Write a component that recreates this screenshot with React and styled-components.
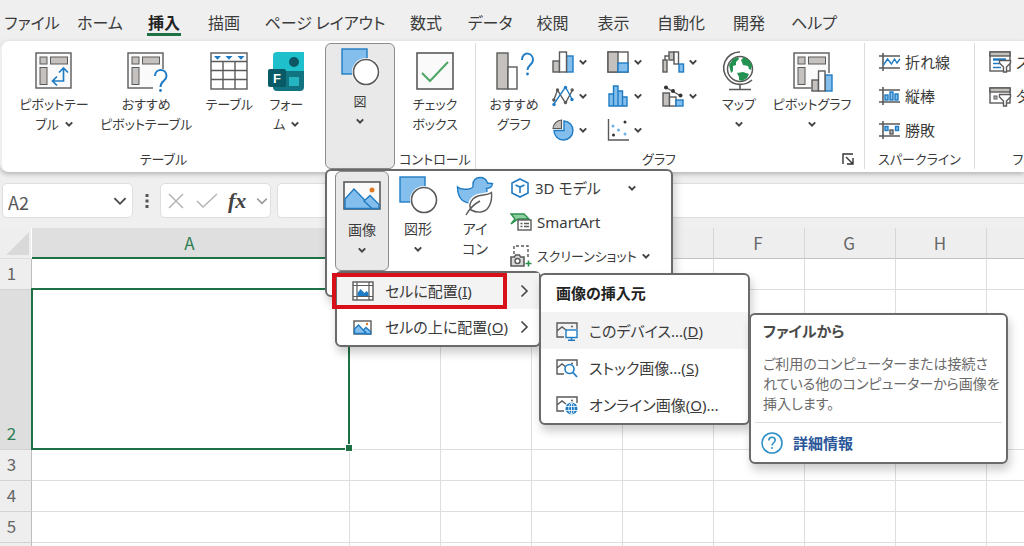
import React from "react";
import styled, { createGlobalStyle, css } from "styled-components";

const GlobalStyle = createGlobalStyle`
  * {
    box-sizing: border-box;
  }

  body {
    margin: 0;
    overflow: hidden;
    background: #efefef;
    color: #3b3b3b;
    font-family: "Noto Sans CJK JP", "Noto Sans", sans-serif;
    font-feature-settings: "palt";
    font-size: 14px;
    line-height: 20px;
  }

  button, input {
    font: inherit;
    font-feature-settings: inherit;
    color: inherit;
  }

  button {
    padding: 0;
    border: 0;
    background: none;
    cursor: pointer;
  }

  svg {
    display: block;
    flex: none;
    fill: none;
    overflow: visible;
  }
`;

const Page = styled.div`
  position: relative;
  height: 100vh;
  overflow: hidden;
  display: flex;
  flex-direction: column;
`;

const Tabs = styled.nav`
  display: flex;
  height: 41px;
  flex: none;
`;

const Tab = styled.button`
  flex: 0 0 ${(p) => p.$width}px;
  padding-top: 3px;
  font-size: 16px;
  white-space: nowrap;
  display: flex;
  justify-content: center;
  align-items: center;

  span {
    padding: 3px 1px 1px;
    line-height: 20px;
    border-bottom: 3px solid transparent;
  }

  ${(p) =>
    p.$active &&
    css`
      color: #222;
      font-weight: bold;

      span {
        border-color: #1e7145;
      }
    `}
`;

const Ribbon = styled.section`
  display: flex;
  flex: none;
  height: 131px;
  margin-left: 2px;
  padding: 2px 0 3px;
  overflow: hidden;
  background: #fff;
  border-radius: 8px 0 0 8px;
`;

const RibbonShadow = styled.div`
  flex: none;
  border-radius: 8px 0 0 8px;
  box-shadow: 0 2px 5px rgba(0, 0, 0, 0.26);
`;

const Group = styled.div`
  flex: 0 0 ${(p) => p.$width}px;
  display: flex;
  flex-direction: column;
  padding-left: ${(p) => p.$indent || 0}px;
  border-right: ${(p) => (p.$line ? "1px solid #dcdcdc" : "0")};
`;

const GroupBody = styled.div`
  flex: 1;
  display: flex;
`;

const GroupFooter = styled.div`
  display: flex;
  align-items: center;
  height: 20px;
  margin-left: -${(p) => p.$indent || 0}px;
  font-size: 13px;

  span {
    flex: 1;
    text-align: center;
    white-space: nowrap;
  }

  button {
    width: 22px;
  }
`;

const BigButton = styled.button`
  flex: 0 0 ${(p) => p.$width}px;
  display: flex;
  flex-direction: column;
  align-items: center;
  gap: 4px;
  padding-top: 9px;
  white-space: nowrap;
  font-size: 13px;
  line-height: 20px;

  ${(p) =>
    p.$pressed &&
    css`
      background: #e9e9e9;
      border: 1px solid #8c8c8c;
      border-radius: 6px;
      padding-top: 5px;
    `}
`;

const Caption = styled.span`
  display: flex;
  flex-direction: column;
  align-items: center;
`;

const CaptionLine = styled.span`
  display: flex;
  align-items: center;
  gap: 6px;
  min-height: 20px;
`;

const SmallGrid = styled.div`
  display: grid;
  grid-template-columns: repeat(3, 55px);
  grid-auto-rows: 34px;
  padding-top: 2px;
`;

const SmallButton = styled.button`
  display: flex;
  align-items: center;
  gap: 5px;
  height: 34px;
  white-space: nowrap;
  font-size: ${(p) => p.$size || 13}px;
`;

const SmallList = styled.div`
  display: flex;
  flex-direction: column;
  padding-top: 2px;
`;

const FormulaBar = styled.div`
  display: flex;
  flex: none;
  height: 35px;
  margin: 11px 0 10px 2px;
`;

const Field = styled.div`
  display: flex;
  align-items: center;
  flex: ${(p) => (p.$width ? `0 0 ${p.$width}px` : "1")};
  min-width: 0;
  background: #fff;
  border: 1px solid #dedede;
  border-right-width: ${(p) => (p.$width ? 1 : 0)}px;
  border-radius: ${(p) => (p.$width ? "5px" : "5px 0 0 5px")};
  padding: 0 5px;
  gap: 10px;

  input {
    flex: 1;
    min-width: 0;
    padding: 2px 0 0;
    border: 0;
    outline: 0;
    background: none;
    font-size: 18px;
    color: #555;
  }
`;

const Dots = styled.div`
  flex: 0 0 27px;
  display: flex;
  justify-content: center;
  align-items: center;
`;

const Spacer = styled.div`
  flex: 0 0 6px;
`;

const FxLabel = styled.span`
  font: italic bold 22px "Liberation Serif", serif;
  color: #444;
`;

const Sheet = styled.table`
  flex: none;
  align-self: flex-start;
  table-layout: fixed;
  width: 1168px;
  border-collapse: separate;
  border-spacing: 0;
  background: #fff;

  th {
    padding: 0;
    font-weight: normal;
    font-size: 17px;
    line-height: 20px;
    color: #666;
    background: #eee;
  }

  td {
    padding: 0;
    border-right: 1px solid #dedede;
    border-bottom: 1px solid #dedede;
  }
`;

const ColumnHead = styled.th`
  height: 31px;
  border-right: 1px solid ${(p) => (p.$active ? "#dfdfdf" : "#d6d6d6")};
  border-bottom: ${(p) => (p.$active ? "2px solid #1e7145" : "1px solid #c4c4c4")};

  && {
    padding-right: 2px;
    background: ${(p) => (p.$active ? "#dfdfdf" : "#eee")};
    color: ${(p) => (p.$active ? "#2f7d53" : "#666")};
  }
`;

const Corner = styled.th`
  border-right: 1px solid #fff;
  border-bottom: 1px solid #dedede;

  svg {
    margin-left: 5px;
  }
`;

const RowHead = styled.th`
  height: ${(p) => p.$height}px;
  vertical-align: bottom;
  border-right: 1px solid #bdbdbd;
  border-bottom: 1px solid #d2d2d2;

  && {
    padding: 0 8px 6px 0;
    ${(p) => p.$active && "background: #dedede; color: #2f7d53;"}
  }
`;

const SelectedCell = styled.td`
  position: relative;

  &::before {
    content: "";
    position: absolute;
    inset: -2px -1px -1px -1px;
    border: 2px solid #1e7145;
  }

  &::after {
    content: "";
    position: absolute;
    right: -3px;
    bottom: -2px;
    width: 6px;
    height: 6px;
    background: #1e7145;
    outline: 1px solid #fff;
  }
`;

const Popup = styled.div`
  position: absolute;
  left: ${(p) => p.$left}px;
  top: ${(p) => p.$top}px;
  width: ${(p) => p.$width}px;
  background: #fff;
  border: 2px solid #6a6a6a;
  border-radius: 6px;
  box-shadow: 2px 6px 10px rgba(0, 0, 0, 0.2);
  font-family: "Noto Sans", "Noto Sans CJK JP", sans-serif;
`;

const GalleryPopup = styled(Popup)`
  display: flex;
  padding: 0 0 22px 8px;
`;

const GalleryButton = styled(BigButton)`
  height: 100px;
  padding-top: 6px;
  font-size: 14px;
`;

const GalleryList = styled(SmallList)`
  padding: 0 0 0 7px;
`;

const MenuItem = styled.button`
  display: flex;
  align-items: center;
  width: 100%;
  height: ${(p) => p.$height || 36}px;
  padding: 0 10px 0 15px;
  gap: 11px;
  font-size: 15px;
  white-space: nowrap;
  background: ${(p) => (p.$hover ? "#f3f3f3" : "none")};

  span {
    flex: 1;
    text-align: left;
  }
`;

const MenuTitle = styled.div`
  padding: 8px 15px 9px;
  font-size: 15px;
  font-weight: bold;
  color: #222;
`;

const RedFrame = styled.div`
  position: absolute;
  left: 332px;
  top: 273px;
  width: 175px;
  height: 36px;
  border: 4px solid #d8101a;
  pointer-events: none;
`;

const Tip = styled(Popup)`
  color: #6a6a6a;
  padding: 6px 4px 8px;

  h2 {
    margin: 0 0 13px;
    padding: 0 8px;
    font-size: 15px;
    line-height: 20px;
    color: #4a4a4a;
  }

  p {
    margin: 0 0 8px;
    padding: 0 8px;
    white-space: nowrap;
  }
`;

const TipLink = styled.a`
  display: flex;
  align-items: center;
  gap: 10px;
  padding: 9px 6px 0;
  border-top: 1px solid #dcdcdc;
  color: #2b579a;
  font-size: 15px;
  font-weight: bold;
  text-decoration: none;
`;

const DARK = "#5a5a5a";
const GRAY = "#c4c1bf";
const BLUE = "#83beec";
const LINE = "#1f7cc4";

const Chevron = ({ size = 8, color = "#444", width = 2 }) => (
  <svg width={size} height={size} viewBox="0 0 8 8">
    <path d="M0.8 2.4 4 5.6 7.2 2.4" stroke={color} strokeWidth={(width * 8) / size} />
  </svg>
);

const ChevronRight = () => (
  <svg width="9" height="14" viewBox="0 0 9 14">
    <path d="M1.5 1.5 7 7l-5.5 5.5" stroke="#444" strokeWidth="1.6" />
  </svg>
);

const Icon = ({ w = 22, h = 22, children }) => (
  <svg width={w} height={h} viewBox={`0 0 ${w} ${h}`} stroke={DARK} strokeWidth="1.4">
    {children}
  </svg>
);

// frame shared by the three pivot icons
const PivotFrame = () => (
  <>
    <rect x="1" y="1" width="35" height="35" fill="#fafafa" />
    <rect x="5" y="5" width="7" height="7" fill={GRAY} strokeWidth="1" />
    <rect x="15.5" y="5" width="17" height="7" fill={GRAY} strokeWidth="1" />
    <rect x="5" y="15.5" width="7" height="17" fill={GRAY} strokeWidth="1" />
  </>
);

const PivotIcon = () => (
  <Icon w={38} h={38}>
    <PivotFrame />
    <path d="M18 29h10.5V17M22 24.5 17.5 29l4.5 4.5M24 20.5l4.5-4.5 4.5 4.5" stroke={LINE} strokeWidth="1.7" />
  </Icon>
);

const PivotHelpIcon = () => (
  <Icon w={38} h={38}>
    <PivotFrame />
    <path d="M26 40V26l3-9h12v23z" fill="#fff" stroke="none" />
    <path d="M28 24c0-8 11.5-8 11.5 0 0 5-6 4.5-6 11" stroke={LINE} strokeWidth="2" />
    <circle cx="33.5" cy="38.5" r="1.4" fill={LINE} stroke="none" />
  </Icon>
);

const TableIcon = () => (
  <Icon w={38} h={38}>
    <rect x="1" y="1" width="36" height="36" fill="#fff" />
    <path d="M1 9.5h36M1 18.5h36M1 27.5h36M13 9.5V37M25 9.5V37" />
    <path d="M4 4h7L7.5 7.8zM15.5 4h7L19 7.8zM27.5 4h7L31 7.8z" fill={LINE} stroke="none" />
  </Icon>
);

const FormsIcon = () => (
  <svg width="38" height="38" viewBox="0 1 38 38">
    <path d="M6 5a4 4 0 0 1 4-4h27v19H6z" fill="#1fc0cb" />
    <path d="M6 20h31v16a4 4 0 0 1-4 4H10a4 4 0 0 1-4-4z" fill="#127481" />
    <circle cx="27" cy="11" r="5" fill="#0c5763" />
    <rect x="22" y="26" width="10" height="9" fill="#25b5c0" />
    <rect x="1" y="18" width="18" height="18" rx="2" fill="#075a66" />
    <text x="10" y="32" textAnchor="middle" fill="#fff" fontFamily="Liberation Sans, sans-serif" fontWeight="bold" fontSize="13">F</text>
  </svg>
);

const ShapesIcon = () => (
  <Icon w={38} h={38}>
    <rect x="1" y="0" width="25" height="25" fill={BLUE} stroke={LINE} />
    <circle cx="25" cy="23" r="14" fill="#fff" stroke="none" />
    <circle cx="25" cy="23" r="12.5" fill="#fff" strokeWidth="1.6" />
  </Icon>
);

const CheckIcon = () => (
  <Icon w={38} h={38}>
    <rect x="1" y="1" width="36" height="36" fill="#fafafa" strokeWidth="1.6" />
    <path d="m6 21 8 8L32 10" stroke="#4ea564" strokeWidth="2" />
  </Icon>
);

const ChartHelpIcon = () => (
  <Icon w={38} h={38}>
    <rect x="2" y="1" width="11" height="36" fill={GRAY} />
    <rect x="13" y="15" width="9" height="22" fill="#fff" />
    <path d="M27 8c0-9 11-8 11 0 0 4.5-5.5 5-5.5 10" stroke={LINE} strokeWidth="2" />
    <circle cx="32.5" cy="22" r="1.4" fill={LINE} stroke="none" />
  </Icon>
);

const ColumnIcon = () => (
  <Icon>
    <rect x="1" y="10" width="6.5" height="11" fill={GRAY} />
    <rect x="14.5" y="5" width="6.5" height="16" fill={BLUE} stroke={LINE} />
    <rect x="7.5" y="1" width="7" height="20" fill="#fff" />
  </Icon>
);

const TreemapIcon = () => (
  <Icon>
    <rect x="1" y="1" width="20" height="20" fill="#fff" />
    <rect x="1" y="1" width="10" height="20" fill={GRAY} />
    <rect x="11" y="12" width="10" height="9" fill={BLUE} stroke={LINE} />
  </Icon>
);

const WaterfallIcon = () => (
  <Icon>
    <rect x="1" y="9" width="4" height="12" fill={GRAY} />
    <path d="M3 9V5h4" />
    <rect x="7" y="1" width="5" height="8" fill={GRAY} />
    <rect x="12" y="1" width="4.5" height="12" fill="#fff" />
    <rect x="17" y="13" width="4.5" height="8" fill={BLUE} stroke={LINE} />
  </Icon>
);

const LineIcon = () => (
  <Icon>
    <path d="m1.5 16 4-11 8 13 7-13" />
    <path d="M1.5 19.5 13.5 2l7 13" stroke={LINE} />
    <g fill={DARK} stroke="none"><circle cx="5.5" cy="5" r="1.7" /><circle cx="13.5" cy="17.5" r="1.7" /><circle cx="20.2" cy="5" r="1.7" /><circle cx="1.8" cy="15" r="1.7" /></g>
    <g fill={LINE} stroke="none"><circle cx="13.5" cy="2.5" r="1.7" /><circle cx="20" cy="14.5" r="1.7" /><circle cx="2" cy="19.5" r="1.7" /></g>
  </Icon>
);

const HistogramIcon = () => (
  <Icon>
    <path d="M2 21V9h4.5v12zM6.5 21V1H11v20zM11 21V6h4.5v15zM15.5 21v-9H20v9z" fill={BLUE} stroke={LINE} />
  </Icon>
);

const ComboIcon = () => (
  <Icon>
    <rect x="1" y="8" width="6.5" height="13" fill={GRAY} />
    <rect x="7.5" y="12" width="6.5" height="9" fill="#fff" />
    <rect x="14" y="15" width="7" height="6" fill={BLUE} stroke={LINE} />
    <path d="m3 2 8 4.5L19 11" />
    <g fill="#333" stroke="none"><circle cx="4" cy="2.5" r="2" /><circle cx="11" cy="6" r="2" /><circle cx="18.5" cy="10.5" r="2" /></g>
  </Icon>
);

const PieIcon = () => (
  <Icon>
    <path d="M12 2v9.5H2A9.5 9.5 0 1 0 12 2z" fill={BLUE} stroke={LINE} />
    <path d="M9.5 1v8.5H1A9 9 0 0 1 9.5 1z" fill={GRAY} strokeWidth="1.2" />
  </Icon>
);

const ScatterIcon = () => (
  <Icon>
    <path d="M1.5 0v21H22" />
    <g fill="#333" stroke="none"><circle cx="18" cy="3" r="1.5" /><circle cx="6.5" cy="16" r="1.5" /></g>
    <g fill="#6eb1e6" stroke="none"><circle cx="6" cy="7" r="1.5" /><circle cx="11.5" cy="11" r="1.5" /><circle cx="18" cy="15" r="1.5" /></g>
  </Icon>
);

const GlobeIcon = () => (
  <Icon w={34} h={38}>
    <circle cx="18" cy="17" r="12.5" fill="#fff" strokeWidth="1.5" />
    <path d="M7 13 11 7l5-2 1 2-3 3 0 3-3 1 0 5-2 2zM19 8l3-3 5 3 3 5-1 5-2-1-1-3-5-1zM15 21l6-1 6 2-2 4-5 3-3-1 0-3z" fill="#239150" stroke="none" />
    <path d="M18 0A16 16 0 0 0 6 27c6 7 17 7 24 1M18 32v5M7 37.5h22" strokeWidth="1.6" />
  </Icon>
);

const PivotChartIcon = () => (
  <Icon w={38} h={38}>
    <PivotFrame />
    <path d="M18 27h6v-9h9v3h7v19H18z" fill="#fff" stroke="none" />
    <rect x="19" y="28" width="6.5" height="11" fill={GRAY} />
    <rect x="32" y="23" width="7" height="16" fill={BLUE} stroke={LINE} />
    <rect x="25.5" y="19" width="6.5" height="20" fill="#fff" />
  </Icon>
);

const SparkFrame = ({ children }) => (
  <Icon w={21} h={20}>
    <path d="M0 4h21M0 16h21M4 1v18" strokeWidth="1.6" />
    {children}
  </Icon>
);

const SparkLineIcon = () => (
  <SparkFrame><path d="m4.5 13 4-6 4 5 3-5 2.5 4 3-4" stroke={LINE} /></SparkFrame>
);

const SparkColumnIcon = () => (
  <SparkFrame>
    <g fill={BLUE} stroke={LINE}><rect x="6" y="9" width="3" height="5" /><rect x="11" y="6" width="3" height="8" /><rect x="16" y="8" width="3" height="6" /></g>
  </SparkFrame>
);

const SparkWinIcon = () => (
  <SparkFrame>
    <g fill={BLUE} stroke={LINE}><rect x="6" y="6.5" width="3" height="4" /><rect x="16.5" y="6.5" width="3" height="4" /></g>
    <rect x="11" y="10" width="3" height="4" fill={GRAY} />
  </SparkFrame>
);

const Funnel = () => (
  <path d="M10.5 9.5h11v2.5l-4 4v5h-3v-5l-4-4z" fill="#fff" />
);

const SlicerIcon = () => (
  <Icon>
    <rect x="1" y="1" width="20" height="19" fill="#fff" />
    <rect x="1" y="1" width="20" height="4" fill={GRAY} />
    <path d="M4 8.5h13" stroke={LINE} strokeWidth="2.4" />
    <path d="M4 12.5h7M4 16.5h8" stroke={LINE} strokeWidth="1.6" />
    <Funnel />
  </Icon>
);

const TimelineIcon = () => (
  <Icon>
    <rect x="1" y="3" width="20" height="15" fill="#fff" />
    <rect x="1" y="3" width="20" height="4" fill={GRAY} />
    <rect x="5" y="11" width="3" height="3" fill={GRAY} strokeWidth="1" />
    <Funnel />
  </Icon>
);

const LauncherIcon = () => (
  <Icon w={12} h={12}>
    <path d="M1 11V1h10M4 4l6.5 6.5M11 5v6H5" stroke="#333" />
  </Icon>
);

const PictureIcon = () => (
  <Icon w={38} h={38}>
    <rect x="1" y="4" width="36" height="27" fill="#fafafa" strokeWidth="1.6" />
    <path d="M2 21 11 11l19 19.5H2z" fill={BLUE} stroke={LINE} />
    <path d="m21 23 6-5.5 9 9v4H29z" fill={BLUE} stroke={LINE} />
    <circle cx="29" cy="12" r="2.5" fill="#e07a24" stroke="none" />
  </Icon>
);

const DuckIcon = () => (
  <Icon w={38} h={38}>
    <path d="M1.5 10c3 3 7 2.500 11 2 3-.5 5-1.500 4.500-4C16.500 3.500 20 .5 24 .5c4 0 6.500 2.500 7.500 5.500l5 .5c-.5 3.500-3 5-6 5 1 3 0 7-3 10-5 5-14 7-21 2C3 20.500 1.500 16 1.500 10z" fill={BLUE} stroke={LINE} />
    <path d="M15 33c-3-6 1-12 7-14 5-1.500 9-.5 13.500-3.500 1 10-3 18.500-10.500 19.500-4 .5-7-.5-10-2z" fill="#fff" stroke="#fff" strokeWidth="4" />
    <path d="M15 33c-3-6 1-12 7-14 5-1.500 9-.5 13.500-3.500 1 10-3 18.500-10.500 19.500-4 .5-7-.5-10-2zM10 38c4-7 8-11 14-14" fill="#fff" />
  </Icon>
);

const CubeIcon = () => (
  <Icon w={20} h={20}>
    <path d="M10 1 18 5v10l-8 4-8-4V5zM5.5 7 10 9l4.5-2M10 9v6" stroke={LINE} strokeWidth="1.6" />
  </Icon>
);

const SmartArtIcon = () => (
  <Icon w={22} h={20}>
    <path d="M1 2h13l5 5H8l-7 5 4-5z" fill="#8fd0a3" stroke="#2c8f4e" />
    <rect x="8" y="8" width="13" height="10" fill="#fff" />
    <path d="M10.5 11.5h2M14 11.5h5M10.5 14.5h2M14 14.5h5" />
  </Icon>
);

const ScreenshotIcon = () => (
  <Icon>
    <path d="M4 9V1h14v13" strokeDasharray="3 2" />
    <path d="M1 12h3.5l1-2h4l1 2H14v9H1z" fill="#d8d8d8" strokeWidth="1.6" />
    <circle cx="7.5" cy="16" r="2.5" fill="#fff" />
    <path d="M18.5 15.5v6M15.5 18.5h6" stroke="#2c8f4e" strokeWidth="1.6" />
  </Icon>
);

const InCellIcon = () => (
  <Icon w={22} h={20}>
    <rect x="1" y="1" width="20" height="18" fill="#fff" />
    <path d="M5 1v18M17 1v18M1 4.5h20M1 15.5h20" strokeWidth="1.2" />
    <path d="m5.5 15 0-3 3-4 4 4 2-2 2 2v3z" fill={LINE} stroke="none" />
  </Icon>
);

const OverCellIcon = () => (
  <Icon w={22} h={20}>
    <rect x="2" y="4" width="17" height="13" fill="#fff" />
    <path d="m2.5 12 4-4 8 8.5h-12z" fill={BLUE} stroke={LINE} />
    <path d="m11.5 13 2.5-2.5 4.5 4V17H15z" fill={BLUE} stroke={LINE} />
    <circle cx="15" cy="7" r="1.2" fill="#e07a24" stroke="none" />
  </Icon>
);

const PhotoFrame = ({ children }) => (
  <Icon w={22} h={20}>
    <path d="M8 16H1V2h20v6M1 10l5-4 4 3" />
    <circle cx="16" cy="5.5" r="1" fill={DARK} stroke="none" />
    {children}
  </Icon>
);

const DeviceIcon = () => (
  <PhotoFrame>
    <rect x="10" y="9" width="11" height="7.5" fill="#fff" stroke={LINE} />
    <path d="M15.5 17v2M12 19.3h7" stroke={LINE} />
  </PhotoFrame>
);

const StockIcon = () => (
  <PhotoFrame>
    <circle cx="13.5" cy="11" r="4.5" fill="#fff" stroke={LINE} strokeWidth="1.6" />
    <path d="m17 14.5 4 4.5" stroke={LINE} strokeWidth="1.8" />
  </PhotoFrame>
);

const OnlineIcon = () => (
  <PhotoFrame>
    <circle cx="15.5" cy="13.5" r="6" fill={LINE} stroke="none" />
    <path d="M10 11.5h11M10 15.5h11M15.5 8v11" stroke="#fff" strokeWidth="0.8" />
    <ellipse cx="15.5" cy="13.5" rx="2.8" ry="5.5" stroke="#fff" strokeWidth="0.8" />
  </PhotoFrame>
);

const HelpIcon = () => (
  <svg width="22" height="22" viewBox="0 0 22 22" stroke="#2f8fca" strokeWidth="1.6">
    <circle cx="11" cy="11" r="10" />
    <path d="M7.8 8.5c0-4.5 6.4-4.2 6.4-.3 0 2.4-3.2 2.7-3.2 5.3" />
    <circle cx="11" cy="16" r="1" fill="#2f8fca" stroke="none" />
  </svg>
);

const tabs = [
  ["ファイル", 64],
  ["ホーム", 72],
  ["挿入", 56],
  ["描画", 64],
  ["ページ レイアウト", 138],
  ["数式", 64],
  ["データ", 64],
  ["校閲", 61],
  ["表示", 61],
  ["自動化", 74],
  ["開発", 62],
  ["ヘルプ", 68],
];

const chartIcons = [
  ["縦棒グラフ", ColumnIcon],
  ["階層構造グラフ", TreemapIcon],
  ["ウォーターフォール", WaterfallIcon],
  ["折れ線グラフ", LineIcon],
  ["統計グラフ", HistogramIcon],
  ["複合グラフ", ComboIcon],
  ["円グラフ", PieIcon],
  ["散布図", ScatterIcon],
];

const columns = ["A", "B", "C", "D", "E", "F", "G", "H", "I", "J"];
const rows = [
  [1, 31],
  [2, 160],
  [3, 31],
  [4, 31],
  [5, 31],
  [6, 31],
];

function RibbonButton({ icon, lines, arrow, width, pressed, as: Button = BigButton }) {
  return (
    <Button $width={width} $pressed={pressed}>
      {icon}
      <Caption>
        {lines.map((line, i) => (
          <CaptionLine key={line}>
            {line}
            {arrow === "inline" && i === lines.length - 1 && <Chevron />}
          </CaptionLine>
        ))}
        {arrow === "below" && <CaptionLine><Chevron /></CaptionLine>}
      </Caption>
    </Button>
  );
}

function RibbonGroup({ label, width, line, indent, launcher, children }) {
  return (
    <Group $width={width} $line={line} $indent={indent}>
      <GroupBody>{children}</GroupBody>
      <GroupFooter $indent={indent}>
        <span>{label}</span>
        {launcher && <button aria-label="グラフの設定"><LauncherIcon /></button>}
      </GroupFooter>
    </Group>
  );
}

function InsertRibbon() {
  return (
    <RibbonShadow>
      <Ribbon>
        <RibbonGroup label="テーブル" width={323} indent={6}>
          <RibbonButton width={92} icon={<PivotIcon />} lines={["ピボットテー", "ブル"]} arrow="inline" />
          <RibbonButton width={92} icon={<PivotHelpIcon />} lines={["おすすめ", "ピボットテーブル"]} />
          <RibbonButton width={74} icon={<TableIcon />} lines={["テーブル"]} />
          <RibbonButton width={40} icon={<FormsIcon />} lines={["フォー", "ム"]} arrow="inline" />
        </RibbonGroup>
        <RibbonButton width={70} icon={<ShapesIcon />} lines={["図"]} arrow="below" pressed />
        <RibbonGroup label="コントロール" width={80} line>
          <RibbonButton width={80} icon={<CheckIcon />} lines={["チェック", "ボックス"]} />
        </RibbonGroup>
        <RibbonGroup label="グラフ" width={389} line launcher>
          <RibbonButton width={76} icon={<ChartHelpIcon />} lines={["おすすめ", "グラフ"]} />
          <SmallGrid>
            {chartIcons.map(([name, ChartIcon]) => (
              <SmallButton key={name} aria-label={name}>
                <ChartIcon />
                <Chevron />
              </SmallButton>
            ))}
          </SmallGrid>
          <RibbonButton width={44} icon={<GlobeIcon />} lines={["マップ"]} arrow="below" />
          <RibbonButton width={102} icon={<PivotChartIcon />} lines={["ピボットグラフ"]} arrow="below" />
        </RibbonGroup>
        <RibbonGroup label="スパークライン" width={110} indent={14} line>
          <SmallList>
            <SmallButton $size={15}><SparkLineIcon />折れ線</SmallButton>
            <SmallButton $size={15}><SparkColumnIcon />縦棒</SmallButton>
            <SmallButton $size={15}><SparkWinIcon />勝敗</SmallButton>
          </SmallList>
        </RibbonGroup>
        <RibbonGroup label="フィルター" width={132} indent={14}>
          <SmallList>
            <SmallButton $size={15}><SlicerIcon />スライサー</SmallButton>
            <SmallButton $size={15}><TimelineIcon />タイムライン</SmallButton>
          </SmallList>
        </RibbonGroup>
      </Ribbon>
    </RibbonShadow>
  );
}

function Formula() {
  return (
    <FormulaBar>
      <Field $width={131}>
        <input aria-label="名前ボックス" defaultValue="A2" />
        <button aria-label="名前の一覧"><Chevron size={14} width={1.8} /></button>
      </Field>
      <Dots>
        <svg width="4" height="16" viewBox="0 0 4 16">
          <path d="M0.5 1h3v3h-3zM0.5 6.5h3v3h-3zM0.5 12h3v3h-3z" fill="#555" />
        </svg>
      </Dots>
      <Field $width={111}>
        <button aria-label="キャンセル">
          <svg width="20" height="18" viewBox="0 0 20 18"><path d="m3 2 14 14M17 2 3 16" stroke="#b5b5b5" strokeWidth="1.5" /></svg>
        </button>
        <button aria-label="入力">
          <svg width="22" height="18" viewBox="0 0 22 18"><path d="m1 9 6 6L21 2" stroke="#b5b5b5" strokeWidth="1.5" /></svg>
        </button>
        <FxLabel>fx</FxLabel>
        <Chevron size={12} color="#999" width={1.5} />
      </Field>
      <Spacer />
      <Field>
        <input aria-label="数式バー" />
      </Field>
    </FormulaBar>
  );
}

function Worksheet() {
  return (
    <Sheet>
      <colgroup>
        <col style={{ width: 32 }} />
        {columns.map((name) => (
          <col key={name} style={{ width: name === "A" ? 318 : 91 }} />
        ))}
      </colgroup>
      <thead>
        <tr>
          <Corner>
            <svg width="25" height="25" viewBox="0 0 25 25"><path d="M24 1v23H1z" fill="#d9d9d9" /></svg>
          </Corner>
          {columns.map((name) => (
            <ColumnHead key={name} $active={name === "A"}>{name}</ColumnHead>
          ))}
        </tr>
      </thead>
      <tbody>
        {rows.map(([row, height]) => (
          <tr key={row}>
            <RowHead $height={height} $active={row === 2}>{row}</RowHead>
            {columns.map((name) =>
              row === 2 && name === "A" ? <SelectedCell key={name} /> : <td key={name} />
            )}
          </tr>
        ))}
      </tbody>
    </Sheet>
  );
}

function IllustrationMenus() {
  return (
    <>
      <GalleryPopup $left={325} $top={169} $width={348}>
        <RibbonButton as={GalleryButton} width={54} icon={<PictureIcon />} lines={["画像"]} arrow="below" pressed />
        <RibbonButton as={GalleryButton} width={58} icon={<ShapesIcon />} lines={["図形"]} arrow="below" />
        <RibbonButton as={GalleryButton} width={56} icon={<DuckIcon />} lines={["アイ", "コン"]} />
        <GalleryList>
          <SmallButton $size={15}><CubeIcon />3D モデル<Spacer /><Spacer /><Chevron /></SmallButton>
          <SmallButton $size={15}><SmartArtIcon />SmartArt</SmallButton>
          <SmallButton><ScreenshotIcon />スクリーンショット<Chevron /></SmallButton>
        </GalleryList>
      </GalleryPopup>

      <Popup $left={335} $top={271} $width={206}>
        <MenuItem $hover><InCellIcon /><span>セルに配置(<u>I</u>)</span><ChevronRight /></MenuItem>
        <MenuItem><OverCellIcon /><span>セルの上に配置(<u>O</u>)</span><ChevronRight /></MenuItem>
      </Popup>
      <RedFrame />

      <Popup $left={539} $top={273} $width={211}>
        <MenuTitle>画像の挿入元</MenuTitle>
        <MenuItem $height={37} $hover><DeviceIcon /><span>このデバイス...(<u>D</u>)</span></MenuItem>
        <MenuItem $height={37}><StockIcon /><span>ストック画像...(<u>S</u>)</span></MenuItem>
        <MenuItem $height={37}><OnlineIcon /><span>オンライン画像(<u>O</u>)...</span></MenuItem>
      </Popup>

      <Tip $left={749} $top={313} $width={259}>
        <h2>ファイルから</h2>
        <p>
          ご利用のコンピューターまたは接続さ<br />
          れている他のコンピューターから画像を<br />
          挿入します。
        </p>
        <TipLink href="#help"><HelpIcon />詳細情報</TipLink>
      </Tip>
    </>
  );
}

function App() {
  return (
    <>
      <GlobalStyle />
      <Page>
        <Tabs>
          {tabs.map(([name, width]) => (
            <Tab key={name} $width={width} $active={name === "挿入"}><span>{name}</span></Tab>
          ))}
        </Tabs>
        <InsertRibbon />
        <Formula />
        <Worksheet />
        <IllustrationMenus />
      </Page>
    </>
  );
}

export default App;
